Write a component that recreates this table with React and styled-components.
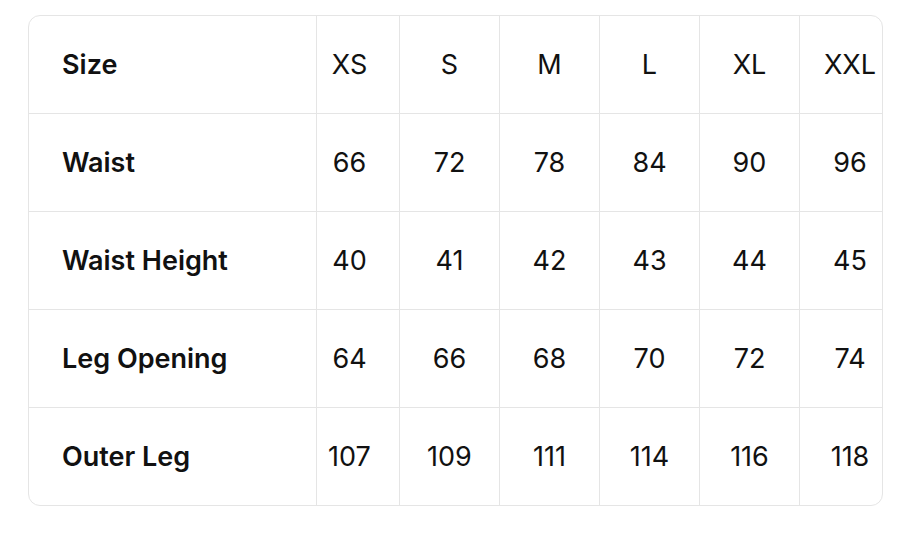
import React from "react";
import styled, { createGlobalStyle } from "styled-components";

const GlobalStyle = createGlobalStyle`
  html, body { margin: 0; padding: 0; background: #ffffff; }
  body { font-family: Inter, "Noto Sans", sans-serif; color: #111111; }
  * { box-sizing: border-box; }
`;

const Page = styled.div`
  padding: 15px 0 0 28px;
`;

const Card = styled.div`
  width: 855px;
  border: 1px solid #e5e5e5;
  border-radius: 12px;
  overflow: hidden;
  display: grid;
  grid-template-columns: 288px 83px 100px 100px 100px 100px 82px;
  background: #ffffff;
`;

const Cell = styled.div`
  height: ${(p) => (p.$last ? 97 : 98)}px;
  display: flex;
  align-items: center;
  justify-content: ${(p) => (p.$label ? "flex-start" : "center")};
  padding: ${(p) =>
    p.$label ? "0 0 0 33px" : p.$edge === "left" ? "0 17px 0 0" : p.$edge === "right" ? "0 0 0 18px" : "0"};
  border-right: ${(p) => (p.$edge === "right" ? "none" : "1px solid #e5e5e5")};
  border-bottom: ${(p) => (p.$last ? "none" : "1px solid #e5e5e5")};
  font-size: 27px;
  font-weight: ${(p) => (p.$label ? 600 : 400)};
  letter-spacing: 0;
  color: #111111;
  white-space: nowrap;
`;

const sizes = ["XS", "S", "M", "L", "XL", "XXL"];
const rows = [
  ["Waist", [66, 72, 78, 84, 90, 96]],
  ["Waist Height", [40, 41, 42, 43, 44, 45]],
  ["Leg Opening", [64, 66, 68, 70, 72, 74]],
  ["Outer Leg", [107, 109, 111, 114, 116, 118]],
];

const edgeFor = (i) => (i === 0 ? "left" : i === sizes.length - 1 ? "right" : undefined);

export default function App() {
  const all = [["Size", sizes], ...rows];
  return (
    <>
      <GlobalStyle />
      <Page>
        <Card>
          {all.map(([label, values], r) => {
            const last = r === all.length - 1;
            return (
              <React.Fragment key={label}>
                <Cell $label $last={last}>{label}</Cell>
                {values.map((v, i) => (
                  <Cell key={i} $edge={edgeFor(i)} $last={last}>
                    {v}
                  </Cell>
                ))}
              </React.Fragment>
            );
          })}
        </Card>
      </Page>
    </>
  );
}
